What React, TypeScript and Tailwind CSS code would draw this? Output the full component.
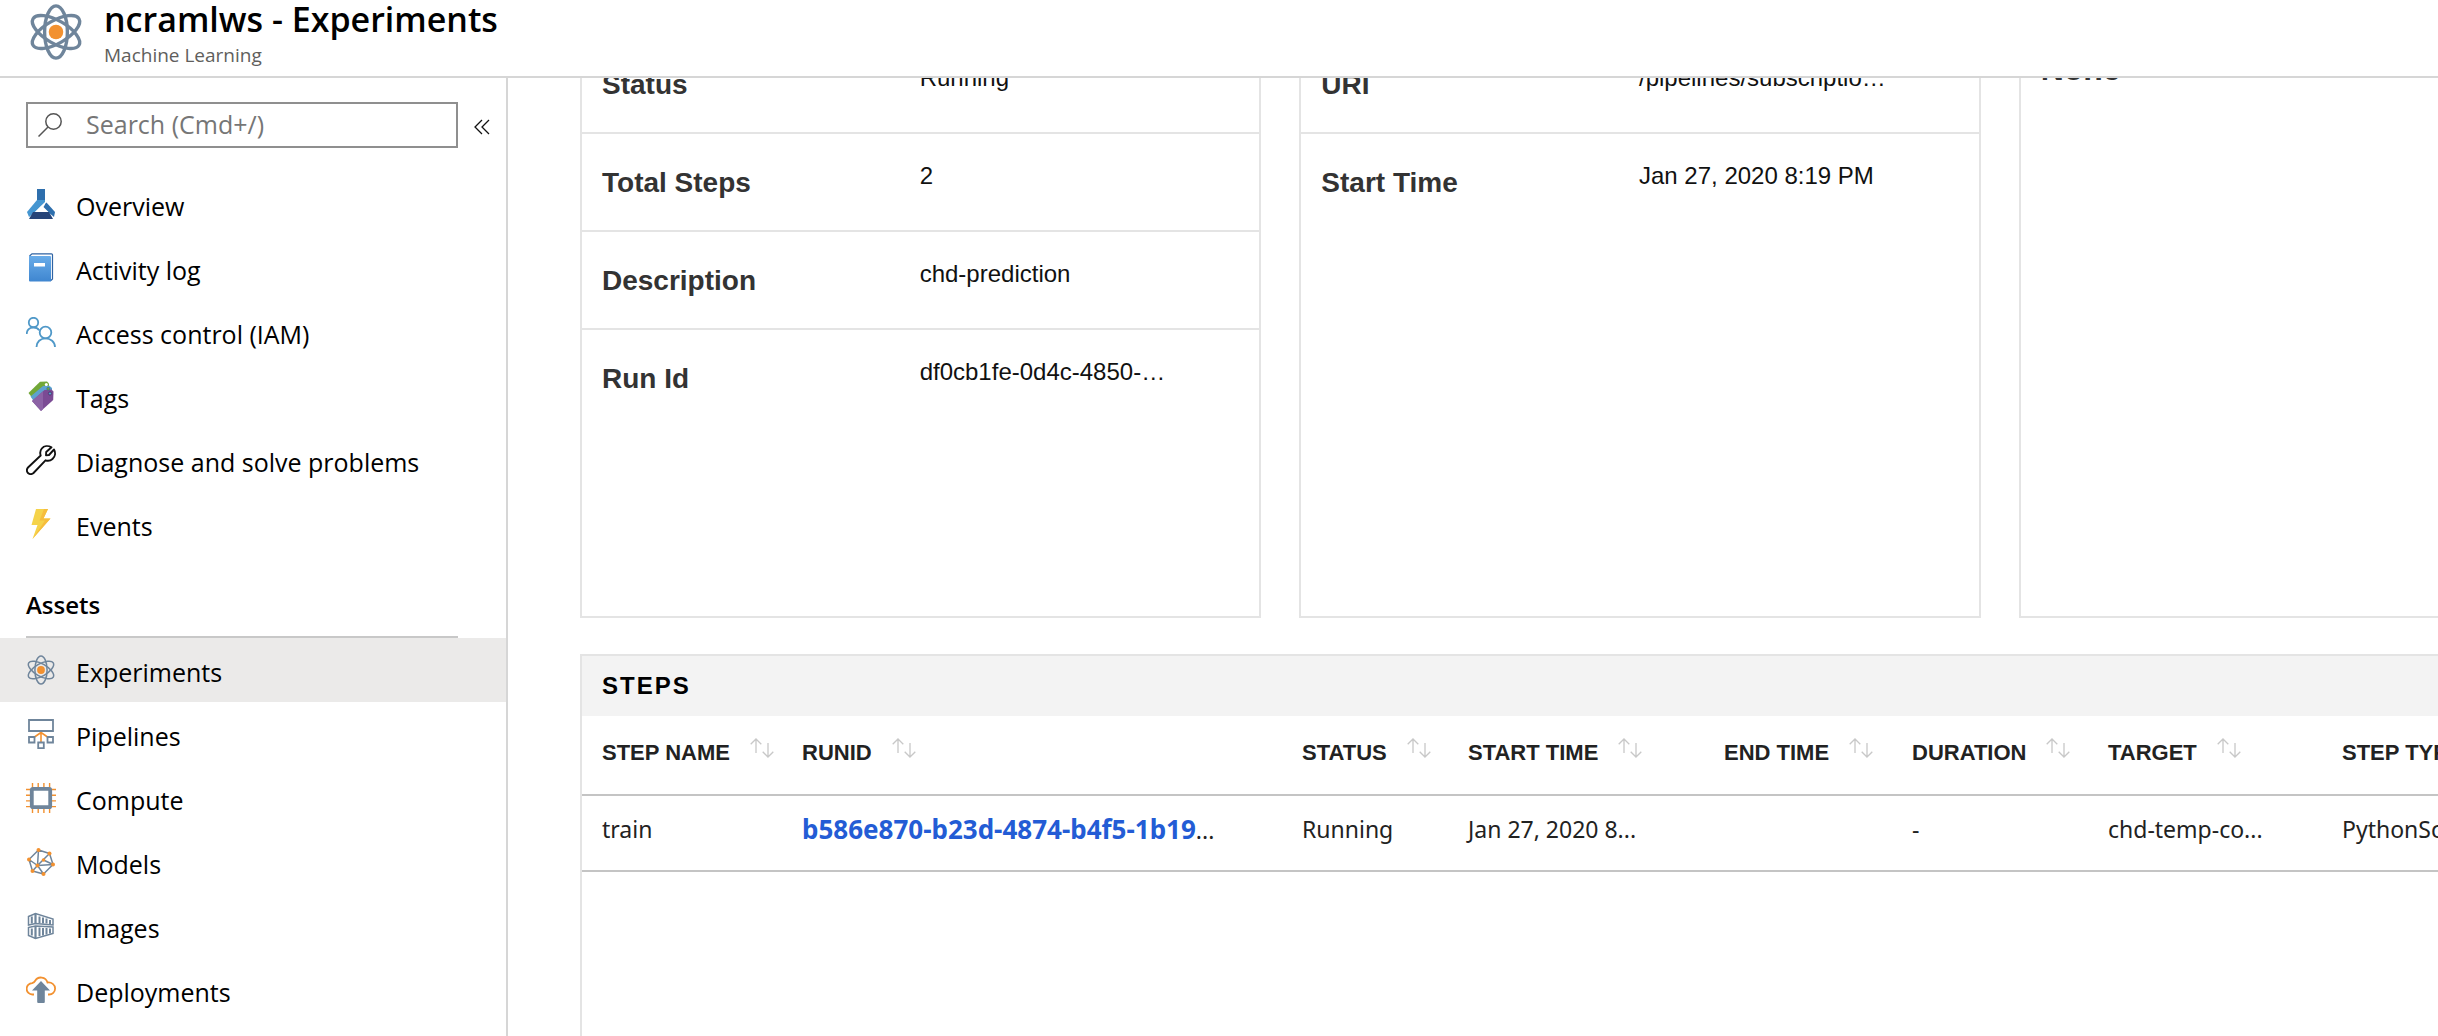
import React from "react";

type IconProps = { className?: string };
const SLATE = "#6f859b";
const ORANGE = "#f29130";

function Atom({ className, w = 1.5 }: IconProps & { w?: number }) {
  return (
    <svg className={className} viewBox="0 0 30 30" fill="none" stroke={SLATE} strokeWidth={w} aria-hidden="true">
      <ellipse cx="15" cy="15" rx="6.100" ry="14" />
      <ellipse cx="15" cy="15" rx="6.100" ry="14.200" transform="rotate(60 15 15)" />
      <ellipse cx="15" cy="15" rx="6.100" ry="14.200" transform="rotate(-60 15 15)" />
      <circle cx="15" cy="15" r="3.900" fill={ORANGE} stroke="none" />
    </svg>
  );
}

function Flask({ className }: IconProps) {
  return (
    <svg className={className} viewBox="0 0 30 30" aria-hidden="true">
      <path d="M11 0h8v11h-8z" fill="#2e6fad" />
      <path d="M11 11h8v2L8 24l-5 4-2-5z" fill="#4596d1" />
      <path d="M20.500 13.500l8.500 9.500-1 5-12-10z" fill="#2e6fad" />
      <path d="M7 23h16l4 7H3z" fill="#264478" />
      <path d="M14.500 17.500l3.500-3 1 1-1.500 2.500 5 5H9z" fill="#fff" />
    </svg>
  );
}

function Book({ className }: IconProps) {
  return (
    <svg className={className} viewBox="0 0 30 30" aria-hidden="true">
      <defs>
        <linearGradient id="book" x1="0" y1="0" x2="0" y2="1">
          <stop offset="0" stopColor="#69ace9" />
          <stop offset="1" stopColor="#3f86d0" />
        </linearGradient>
      </defs>
      <path d="M3.500 3L6 .8h19.500q1 0 1 1V26l-1.500 1.500" fill="#fff" stroke="#2f63a3" strokeWidth="1.200" />
      <path d="M3 3h21q1 0 1 1v24.500H4q-1 0-1-1z" fill="url(#book)" />
      <path d="M8 10h11v3.500H8z" fill="#fff" />
    </svg>
  );
}

function People({ className }: IconProps) {
  return (
    <svg className={className} viewBox="0 0 30 30" fill="none" stroke="#4f98c8" strokeWidth="1.800" aria-hidden="true">
      <circle cx="7.500" cy="5.500" r="4.700" />
      <path d="M.7 17c0-4 3-6.500 6.800-6.500 2.500 0 4.500 1 5.700 2.700" />
      <circle cx="19.500" cy="15.500" r="5.800" />
      <path d="M10.500 30c0-5 4-8.700 9-8.700s9.500 3.700 9.500 8.700" />
    </svg>
  );
}

function Tags({ className }: IconProps) {
  return (
    <svg className={className} viewBox="0 0 30 30" aria-hidden="true">
      <path d="M2.500 12L14 .8l7-.3 2 2V7L6 16.500z" fill="#72a737" />
      <path d="M4.500 15.500L17 5l6.500-.3L26 7v5L8 20.500z" fill="#5da2cf" />
      <path d="M6 20L18.500 9l7-.5 2 2-.3 8.500L15 30z" fill="#7b4b94" />
      <path d="M6 20L17 10.300V28l-2 2z" fill="#8c62a5" />
      <circle cx="20.300" cy="3.500" r="1.500" fill="#fff" />
      <circle cx="22.300" cy="7.700" r="1.500" fill="#72a737" stroke="#2f6f9d" strokeWidth=".7" />
      <circle cx="24" cy="12.500" r="1.600" fill="#5da2cf" stroke="#4b2c66" strokeWidth=".8" />
    </svg>
  );
}

function Wrench({ className }: IconProps) {
  return (
    <svg className={className} viewBox="0 0 30 30" fill="none" stroke="#111" strokeWidth="1.900" strokeLinejoin="round" aria-hidden="true">
      <path d="M25.500 2.300C22 .3 18 .8 15.800 3.500c-1.700 2.100-1.900 4.700-1.100 7L2 22.500c-1.500 1.500-1.500 4 0 5.500s4 1.500 5.500 0L19.500 15.300c2.300.8 5 .4 7-1.300 2.700-2.300 3.300-6.200 1.500-9.500l-5 5.500-3 .2.200-3.200z" />
    </svg>
  );
}

function Bolt({ className }: IconProps) {
  return (
    <svg className={className} viewBox="0 0 30 30" aria-hidden="true">
      <path d="M10 0h12l-4.500 9.500H24.500L6.500 30l5-14H5.500z" fill="#f5d34a" />
      <path d="M18 0h4l-4.500 9.500H24.500L6.500 30 19 11.500h-5.500z" fill="#f6bd3d" />
    </svg>
  );
}

function Pipelines({ className }: IconProps) {
  return (
    <svg className={className} viewBox="0 0 30 30" fill="none" stroke={SLATE} strokeWidth="1.800" aria-hidden="true">
      <path d="M15 13v10M15 13.500L8.500 18M15 13.500l6.500 4.500" stroke={ORANGE} strokeWidth="1.600" />
      <path d="M3 1h24v11H3zM3 18h5.500v5.500H3zM21.500 18H27v5.500h-5.500zM12.200 23.500h5.600v5.600h-5.600z" />
    </svg>
  );
}

function Chip({ className }: IconProps) {
  return (
    <svg className={className} viewBox="0 0 30 30" fill="none" aria-hidden="true">
      <path d="M6.500 0v30M12.200 0v30M17.900 0v30M23.600 0v30M0 6.500h30M0 12.200h30M0 17.900h30M0 23.600h30" stroke={ORANGE} strokeWidth="1.400" />
      <rect x="5.800" y="5.800" width="18.400" height="18.400" rx="1" fill="#fff" stroke={SLATE} strokeWidth="3.800" />
    </svg>
  );
}

function Models({ className }: IconProps) {
  return (
    <svg className={className} viewBox="0 0 30 30" aria-hidden="true">
      <path
        d="M12.500 3L23.500 6.500 27 17.500 17.500 27 6.500 24 3 12.500zM12.500 3L11.500 18.500M23.500 6.500L11.500 18.500 6.500 24M17.500 13L27 17.500M3 12.500L11.500 18.500 17.500 27M11.500 18.500L27 17.500"
        fill="none" stroke={SLATE} strokeWidth="1.500" strokeLinejoin="round"
      />
      <g fill={ORANGE}>
        <circle cx="12.500" cy="3" r="2" /><circle cx="23.500" cy="6.500" r="2" /><circle cx="27" cy="17.500" r="2" />
        <circle cx="17.500" cy="27" r="2" /><circle cx="6.500" cy="24" r="2" /><circle cx="3" cy="12.500" r="2" />
        <circle cx="17.500" cy="13" r="1.800" /><circle cx="11.500" cy="18.500" r="2" />
      </g>
    </svg>
  );
}

function Images({ className }: IconProps) {
  return (
    <svg className={className} viewBox="0 0 30 30" fill="none" stroke={SLATE} strokeWidth="1.500" aria-hidden="true">
      <path d="M2.500 5.500L9.500 2.500 27 8v6L9.500 12.500l-7 1.500zM2.500 16.500L9.500 15 27 16v6.500L9.500 27.500l-7-3z" />
      <path d="M9.500 2.500v10M9.500 15v12.500" strokeWidth="2.200" />
      <path d="M5.800 5.500v7M5.800 17.500v7M13.500 5.500v6.500M17 6.500v6M20.500 7.500v5M24 9v4M13.500 16.500v8.500M17 17v7.500M20.500 17v6.500M24 17.500v5" strokeWidth="2" />
    </svg>
  );
}

function Deploy({ className }: IconProps) {
  return (
    <svg className={className} viewBox="0 0 30 30" aria-hidden="true">
      <path d="M8 19.500H6.500a5.700 5.700 0 0 1-.3-11.400C7.500 7.700 8.500 7 9 6a6.800 6.800 0 0 1 12.500 1.500c4-.6 7.600 2.200 7.600 6 0 3.500-2.800 6-6 6H22" fill="none" stroke={ORANGE} strokeWidth="1.800" />
      <path d="M15 6l9 9.500h-5.200V27a1 1 0 0 1-1 1h-5.600a1 1 0 0 1-1-1V15.500H6z" fill={SLATE} />
    </svg>
  );
}

function SortArrows() {
  return (
    <svg className="h-5 w-6 shrink-0" viewBox="0 0 24 20" fill="none" stroke="#c8c8c8" strokeWidth="1.300" aria-hidden="true">
      <path d="M6 15V1M.7 6.300L6 1l5.300 5.300M18 5v14M12.700 13.700L18 19l5.300-5.300" />
    </svg>
  );
}

type Item = { label: string; icon: (p: IconProps) => React.ReactElement; active?: boolean };
const general: Item[] = [
  { label: "Overview", icon: Flask },
  { label: "Activity log", icon: Book },
  { label: "Access control (IAM)", icon: People },
  { label: "Tags", icon: Tags },
  { label: "Diagnose and solve problems", icon: Wrench },
  { label: "Events", icon: Bolt },
];
const assets: Item[] = [
  { label: "Experiments", icon: Atom, active: true },
  { label: "Pipelines", icon: Pipelines },
  { label: "Compute", icon: Chip },
  { label: "Models", icon: Models },
  { label: "Images", icon: Images },
  { label: "Deployments", icon: Deploy },
];

function NavList({ items }: { items: Item[] }) {
  return (
    <ul>
      {items.map(({ label, icon: Icon, active }) => (
        <li key={label}>
          <a
            href="#"
            aria-current={active ? "page" : undefined}
            className={`flex h-16 items-center gap-5 pl-[26px] ${active ? "bg-[#ebeae9]" : ""}`}
          >
            <Icon className="size-[30px] shrink-0" />
            <span className="pt-1.5">{label}</span>
          </a>
        </li>
      ))}
    </ul>
  );
}

function Details({ rows }: { rows: [string, string][] }) {
  return (
    <dl className="flex flex-col border-2 border-[#e4e4e4]">
      {rows.map(([name, value], i) => (
        <div
          key={name}
          className={`flex h-[98px] pr-[22px] pl-5 ${i < rows.length - 1 ? "border-b-2 border-[#e4e4e4]" : ""}`}
        >
          <dt className="w-1/2 pt-[31px] text-[28px] leading-9 font-bold text-[#333]">{name}</dt>
          <dd className="w-1/2 pt-[26px] text-2xl leading-8 text-[#111]">{value}</dd>
        </div>
      ))}
    </dl>
  );
}

const columns: { name: string; width: string }[] = [
  { name: "STEP NAME", width: "w-[200px]" },
  { name: "RUNID", width: "w-[500px]" },
  { name: "STATUS", width: "w-[166px]" },
  { name: "START TIME", width: "w-[256px]" },
  { name: "END TIME", width: "w-[188px]" },
  { name: "DURATION", width: "w-[196px]" },
  { name: "TARGET", width: "w-[234px]" },
  { name: "STEP TYPE", width: "" },
];

export default function App() {
  return (
    <div className="flex h-screen flex-col overflow-hidden bg-white font-['Open_Sans','Noto_Sans',sans-serif] text-black">
      <header className="flex h-[78px] shrink-0 items-start gap-5 border-b-2 border-[#d6d6d6] pl-7">
        <Atom className="mt-1 size-14" w={1.8} />
        <div>
          <h1 className="text-[34px] leading-[38px] font-semibold">ncramlws - Experiments</h1>
          <p className="text-[19px] leading-[34px] text-[#605e5c]">Machine Learning</p>
        </div>
      </header>

      <div className="flex min-h-0 flex-1">
        <nav aria-label="Workspace" className="w-[508px] shrink-0 overflow-hidden border-r-2 border-[#d6d6d6] text-[25px]">
          <div className="flex items-center gap-4 pt-6 pl-[26px]">
            <label className="flex h-[46px] w-[432px] items-center border-2 border-[#8f8f8f] pl-2.5">
              <svg className="size-6 shrink-0" viewBox="0 0 24 24" fill="none" stroke="#555" strokeWidth="1.500" aria-hidden="true">
                <circle cx="15.500" cy="8.500" r="7.700" />
                <path d="M10 14L.5 23.500" />
              </svg>
              <input
                type="search"
                aria-label="Search"
                placeholder="Search (Cmd+/)"
                className="ml-6 w-full min-w-0 bg-transparent outline-none placeholder:text-[#767676]"
              />
            </label>
            <button type="button" aria-label="Collapse menu" className="mt-1">
              <svg className="size-4" viewBox="0 0 16 16" fill="none" stroke="#111" strokeWidth="1.300" aria-hidden="true">
                <path d="M8 1L1 8l7 7M15 1L8 8l7 7" />
              </svg>
            </button>
          </div>
          <div className="pt-6">
            <NavList items={general} />
          </div>
          <h2 className="mr-12 ml-[26px] h-[82px] w-[432px] border-b-2 border-[#c8c8c8] pt-[31px] text-2xl leading-9 font-semibold">Assets</h2>
          <NavList items={assets} />
        </nav>

        <main className="min-w-0 flex-1 overflow-hidden pl-[72px] font-['Liberation_Sans',Arial,sans-serif]">
          <div className="-mt-11 flex h-full min-w-[2120px] flex-col">
            <section className="grid h-[584px] shrink-0 grid-cols-3 gap-[38px]">
              <Details
                rows={[
                  ["Status", "Running"],
                  ["Total Steps", "2"],
                  ["Description", "chd-prediction"],
                  ["Run Id", "df0cb1fe-0d4c-4850-…"],
                ]}
              />
              <Details
                rows={[
                  ["URI", "/pipelines/subscriptio…"],
                  ["Start Time", "Jan 27, 2020 8:19 PM"],
                ]}
              />
              <div className="border-2 border-[#e4e4e4] px-5 pt-[15px] text-[32px] leading-9 font-bold text-[#333]">None</div>
            </section>

            <section className="mt-9 -mb-11 grow border-2 border-b-0 border-[#e4e4e4]">
              <h2 className="flex h-[60px] items-center bg-[#f3f3f3] pl-5 text-2xl font-bold tracking-[2px]">STEPS</h2>
              <table className="w-full table-fixed text-left text-[#222]">
                <thead>
                  <tr className="h-[79px] border-b-2 border-[#c4c4c4]">
                    {columns.map((c) => (
                      <th key={c.name} scope="col" className={`pb-1.5 pl-5 text-[22px] font-bold whitespace-nowrap ${c.width}`}>
                        <button type="button" className="flex items-center gap-5">
                          {c.name}
                          <span className="pb-2"><SortArrows /></span>
                        </button>
                      </th>
                    ))}
                  </tr>
                </thead>
                <tbody>
                  <tr className="h-[76px] border-b-2 border-[#c4c4c4] font-['Noto_Sans',sans-serif] text-[23px] leading-9 whitespace-nowrap">
                    <td className="pb-2 pl-5">train</td>
                    <td className="pb-2 pl-5">
                      <a href="#" className="text-[26px] font-bold text-[#235cd5]">b586e870-b23d-4874-b4f5-1b19</a>...
                    </td>
                    <td className="pb-2 pl-5">Running</td>
                    <td className="pb-2 pl-5">Jan 27, 2020 8...</td>
                    <td className="pb-2 pl-5"></td>
                    <td className="pb-2 pl-5">-</td>
                    <td className="pb-2 pl-5">chd-temp-co...</td>
                    <td className="pb-2 pl-5">PythonScriptStep</td>
                  </tr>
                </tbody>
              </table>
            </section>
          </div>
        </main>
      </div>
    </div>
  );
}
